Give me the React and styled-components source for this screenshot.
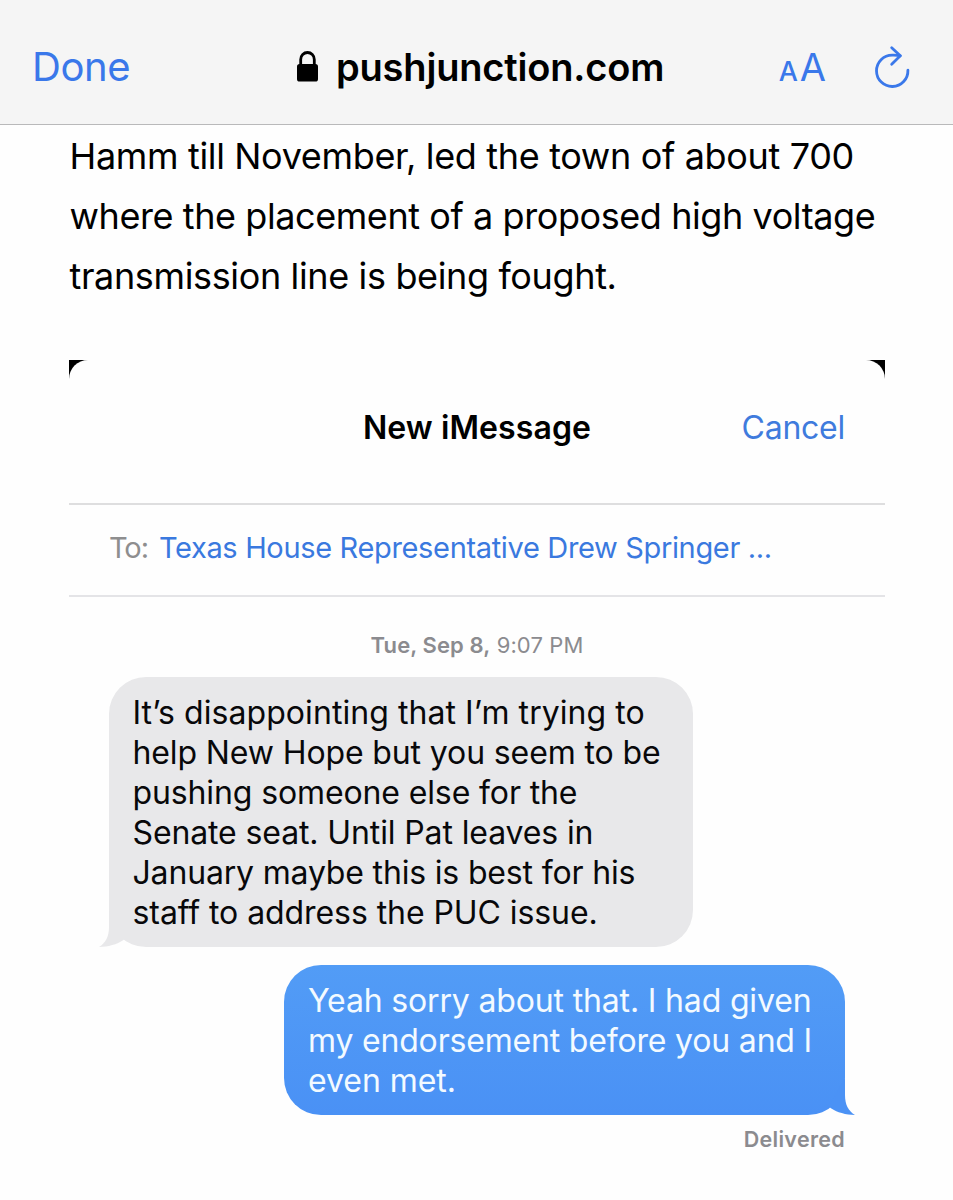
import React from "react";
import styled, { createGlobalStyle } from "styled-components";

const BLUE = "#3a78ea";

const GlobalStyle = createGlobalStyle`
  * { box-sizing: border-box; }
  body {
    margin: 0;
    background: #fff;
    color: #000;
    font-family: Inter, "Liberation Sans", sans-serif;
  }
`;

const Page = styled.div`
  width: 953px;
  height: 1200px;
  overflow: hidden;
  background: #fefefe;
`;

const BrowserBar = styled.header`
  height: 125px;
  padding: 9px 41px 0 32px;
  display: grid;
  grid-template-columns: 265px 1fr auto;
  align-items: center;
  background: #f5f5f5;
  border-bottom: 1px solid #b9b9ba;
`;

const DoneButton = styled.a`
  font-size: 40px;
  line-height: 48px;
  letter-spacing: -0.4px;
  color: ${BLUE};
`;

const Address = styled.div`
  display: flex;
  align-items: center;
  gap: 18px;
  font-size: 38px;
  font-weight: 600;
  line-height: 48px;
  letter-spacing: -0.18px;

  svg { display: block; }
`;

const Tools = styled.div`
  display: flex;
  align-items: center;
  gap: 48px;
  color: ${BLUE};

  svg { display: block; }
`;

const TextSize = styled.div`
  display: flex;
  align-items: baseline;
  gap: 2px;
  padding-top: 6px;
  line-height: 48px;
`;

const Letter = styled.span`
  font-size: ${(p) => p.$size}px;
  font-weight: ${(p) => p.$weight};
`;

const Article = styled.main`
  width: 816px;
  margin-left: 69px;
`;

const Paragraph = styled.p`
  margin: 1px 0 54px;
  padding-left: 0.5px;
  font-size: 36px;
  line-height: 60px;
`;

const Line = styled.span`
  display: block;
  white-space: nowrap;
  letter-spacing: ${(p) => p.$track || 0}px;
`;

const Corners = styled.div`
  background: linear-gradient(#000 22px, #fefefe 22px);
`;

const SheetHeader = styled.div`
  height: 145px;
  padding: 0 40px 7px;
  display: grid;
  grid-template-columns: 1fr auto 1fr;
  align-items: center;
  background: #fefefe;
  border-radius: 19px 19px 0 0;
  border-bottom: 2px solid #dededf;
  font-size: 32px;
  line-height: 40px;
`;

const SheetTitle = styled.h1`
  grid-column: 2;
  margin: 0;
  font-size: inherit;
  font-weight: 600;
  letter-spacing: 0.1px;
`;

const Cancel = styled.a`
  justify-self: end;
  letter-spacing: -0.25px;
  color: #3f7bdd;
`;

const Recipient = styled.div`
  height: 92px;
  padding: 0 40px 4px;
  display: flex;
  align-items: center;
  gap: 11px;
  border-bottom: 2px solid #e4e4e7;
  font-size: 29px;
  line-height: 40px;
  letter-spacing: -0.34px;
  color: #8e8e8f;
  white-space: nowrap;

  span { letter-spacing: -1.1px; }
  b { font-weight: 400; color: #3a79df; }
`;

const Thread = styled.div`
  display: flex;
  flex-direction: column;
  padding: 33px 40px 0;
`;

const Stamp = styled.div`
  align-self: center;
  margin-bottom: 17px;
  font-size: 22px;
  line-height: 30px;
  letter-spacing: 0.1px;
  color: #8b8b8f;

  b { font-weight: 600; }
`;

const Bubble = styled.div`
  position: relative;
  align-self: ${(p) => (p.$sent ? "flex-end" : "flex-start")};
  width: ${(p) => (p.$sent ? 561 : 584)}px;
  padding: ${(p) => (p.$sent ? "16px 0 14px 24px" : "15.500px 0 14.500px 23.500px")};
  margin-bottom: ${(p) => (p.$sent ? 9 : 18)}px;
  border-radius: 37px;
  font-size: 32px;
  line-height: 40px;
  color: ${(p) => (p.$sent ? "#f3faff" : "#08080a")};
  background: ${(p) =>
    p.$sent ? "linear-gradient(#529cf6, #4a91f5)" : "#e8e8ea"};
`;

const Tail = styled.svg`
  position: absolute;
  bottom: 0;
  ${(p) => (p.$sent ? "right: -10px; transform: scaleX(-1);" : "left: -10px;")}
  color: ${(p) => (p.$sent ? "#4b92f5" : "#e8e8ea")};
`;

const Receipt = styled.div`
  align-self: flex-end;
  font-size: 21.5px;
  font-weight: 600;
  line-height: 30px;
  letter-spacing: 0.3px;
  color: #8b8b8f;
`;

const received = [
  ["It’s disappointing that I’m trying to", 0.06],
  ["help New Hope but you seem to be", -0.12],
  ["pushing someone else for the", -0.12],
  ["Senate seat. Until Pat leaves in", -0.12],
  ["January maybe this is best for his", -0.17],
  ["staff to address the PUC issue.", -0.07],
];

const sent = [
  ["Yeah sorry about that. I had given", -0.16],
  ["my endorsement before you and I", -0.18],
  ["even met.", -0.05],
];

const paragraph = [
  ["Hamm till November, led the town of about 700", -0.34],
  ["where the placement of a proposed high voltage", -0.42],
  ["transmission line is being fought.", -0.36],
];

const Lines = ({ items }) =>
  items.map(([text, track]) => (
    <Line key={text} $track={track}>
      {text}
    </Line>
  ));

const Message = ({ lines, isSent }) => (
  <Bubble $sent={isSent}>
    <Lines items={lines} />
    <Tail $sent={isSent} width="30" height="40" viewBox="0 0 30 40">
      <path
        fill="currentColor"
        d="M10 3V20C10 30 6.500 36 0 40C9 39.800 18 37.500 24.500 33L26 31Z"
      />
    </Tail>
  </Bubble>
);

const LockIcon = () => (
  <svg width="21" height="31" viewBox="0 0 21 31">
    <path
      d="M3.700 14V8.500a6.800 7 0 0 1 13.600 0V14"
      fill="none"
      stroke="#000"
      strokeWidth="2.800"
    />
    <rect x="0" y="13" width="21" height="17.500" rx="2.600" />
  </svg>
);

const ReloadIcon = () => (
  <svg
    width="38"
    height="45"
    viewBox="2 0 38 45"
    fill="none"
    stroke="currentColor"
    strokeWidth="2.800"
    strokeLinecap="round"
    strokeLinejoin="round"
  >
    <path d="M35.900 26.200A15.700 15.700 0 1 1 20.300 11.100Q24.500 10.900 28.300 11.800" />
    <path d="M19.700 3.800L28.300 11.800L19.700 20.200" />
  </svg>
);

export default function App() {
  return (
    <Page>
      <GlobalStyle />
      <BrowserBar>
        <DoneButton>Done</DoneButton>
        <Address>
          <LockIcon />
          pushjunction.com
        </Address>
        <Tools>
          <TextSize>
            <Letter $size={27} $weight={500}>A</Letter>
            <Letter $size={38} $weight={400}>A</Letter>
          </TextSize>
          <ReloadIcon />
        </Tools>
      </BrowserBar>
      <Article>
        <Paragraph>
          <Lines items={paragraph} />
        </Paragraph>
        <Corners>
          <SheetHeader>
            <SheetTitle>New iMessage</SheetTitle>
            <Cancel>Cancel</Cancel>
          </SheetHeader>
        </Corners>
        <Recipient>
          <span>To:</span>
          <b>Texas House Representative Drew Springer ...</b>
        </Recipient>
        <Thread>
          <Stamp>
            <b>Tue, Sep 8,</b> 9:07 PM
          </Stamp>
          <Message lines={received} />
          <Message lines={sent} isSent />
          <Receipt>Delivered</Receipt>
        </Thread>
      </Article>
    </Page>
  );
}
